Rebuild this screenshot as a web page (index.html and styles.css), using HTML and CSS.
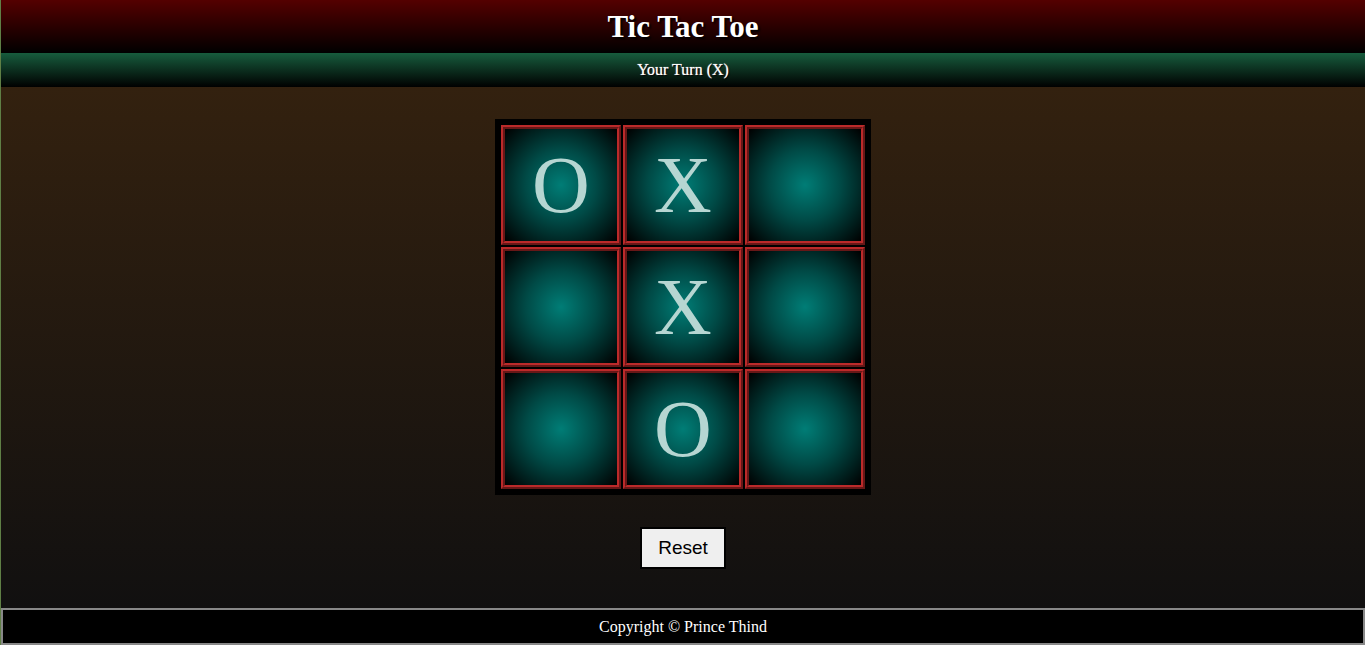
FILE: index.html
```html
<!DOCTYPE html>
<html lang="en">
<head>
<meta charset="utf-8">
<title>Tic Tac Toe</title>
<link rel="stylesheet" href="styles.css">
</head>
<body>
<div class="page">
  <header class="header"><h1 class="title">Tic Tac Toe</h1></header>
  <div class="status">Your Turn (X)</div>
  <main class="main">
    <div class="board">
      <div class="cell">O</div>
      <div class="cell">X</div>
      <div class="cell"></div>
      <div class="cell"></div>
      <div class="cell">X</div>
      <div class="cell"></div>
      <div class="cell"></div>
      <div class="cell">O</div>
      <div class="cell"></div>
    </div>
    <button class="reset" type="button">Reset</button>
  </main>
  <footer class="footer">Copyright © Prince Thind</footer>
</div>
</body>
</html>
```
FILE: styles.css
```css
html, body {
  margin: 0;
  padding: 0;
  height: 100%;
}
body {
  font-family: "Liberation Serif", "Times New Roman", serif;
  background: #111;
}
.page {
  min-height: 100vh;
  display: flex;
  flex-direction: column;
  border-left: 1px solid #5f7f45;
  box-sizing: border-box;
}
.header {
  height: 53px;
  background: linear-gradient(#540000, #000);
  display: flex;
  align-items: center;
  justify-content: center;
}
.title {
  margin: 0;
  font-size: 31px;
  font-weight: bold;
  color: #fff;
  text-shadow: 2px 2px 2px #000;
}
.status {
  height: 34px;
  background: linear-gradient(#175c3d, #000);
  color: #fff;
  font-size: 16px;
  display: flex;
  align-items: center;
  justify-content: center;
  text-shadow: 1px 1px 1px #000, 0 0 1px #fff;
}
.main {
  flex: 1;
  background: linear-gradient(#33210f, #111010);
  display: flex;
  flex-direction: column;
  align-items: center;
  padding-top: 32px;
}
.board {
  display: grid;
  grid-template-columns: repeat(3, 122px);
  grid-auto-rows: 122px;
  padding: 5px;
  background: #000;
}
.cell {
  margin: 1px;
  box-sizing: border-box;
  border: 4px ridge #bb2a2a;
  background: radial-gradient(circle, #007d76 0%, #004a46 45%, #000 100%);
  color: #b6d6d2;
  font-size: 80px;
  display: flex;
  align-items: center;
  justify-content: center;
  line-height: 1;
}
.reset {
  margin-top: 32px;
  font-family: "Liberation Sans", Arial, sans-serif;
  font-size: 19px;
  padding: 8px 16px;
  background: #efefef;
  border: 2px solid #000;
  color: #000;
  margin-bottom: 36px;
}
.footer {
  background: #000;
  color: #fff;
  font-size: 16px;
  text-align: center;
  border: 2px solid #888;
  padding: 8px 0 7px;
  line-height: 18px;
}
```
